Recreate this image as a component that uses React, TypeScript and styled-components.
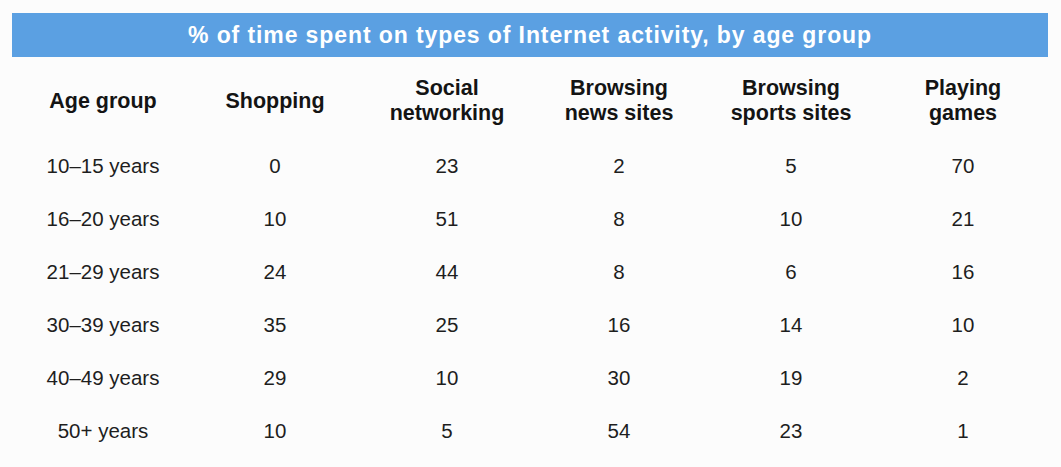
import React from 'react'
import styled, { createGlobalStyle } from 'styled-components'

const GlobalStyle = createGlobalStyle`
    html, body {
        margin: 0;
        padding: 0;
        background: #fcfcfc;
    }
    body {
        font-family: "Liberation Sans", Arial, sans-serif;
    }
`

const headers = [
    ['Age group'],
    ['Shopping'],
    ['Social', 'networking'],
    ['Browsing', 'news sites'],
    ['Browsing', 'sports sites'],
    ['Playing', 'games'],
]

const rows: [string, number, number, number, number, number][] = [
    ['10–15 years', 0, 23, 2, 5, 70],
    ['16–20 years', 10, 51, 8, 10, 21],
    ['21–29 years', 24, 44, 8, 6, 16],
    ['30–39 years', 35, 25, 16, 14, 10],
    ['40–49 years', 29, 10, 30, 19, 2],
    ['50+ years', 10, 5, 54, 23, 1],
]

const App: React.FC = () => {
    return (
        <Page>
            <GlobalStyle />
            <TitleBar>% of time spent on types of Internet activity, by age group</TitleBar>
            <Table>
                <HeaderRow>
                    {headers.map((lines, i) => (
                        <HeaderCell key={i}>
                            {lines.map((line) => (
                                <span key={line}>{line}</span>
                            ))}
                        </HeaderCell>
                    ))}
                </HeaderRow>
                {rows.map((row) => (
                    <DataRow key={row[0]}>
                        {row.map((value, i) => (
                            <Cell key={i}>{value}</Cell>
                        ))}
                    </DataRow>
                ))}
            </Table>
        </Page>
    )
}

const Page = styled.div`
    padding: 13px 0 0 12px;
    width: 1036px;
`

const TitleBar = styled.div`
    height: 44px;
    background: #5ba0e2;
    color: #ffffff;
    font-size: 23px;
    font-weight: 700;
    letter-spacing: 0.9px;
    display: flex;
    align-items: center;
    justify-content: center;
    padding-top: 1px;
    box-sizing: border-box;
`

const Table = styled.div`
    margin-left: 5px;
    width: 1032px;
`

const HeaderRow = styled.div`
    display: grid;
    grid-template-columns: repeat(6, 172px);
    height: 82px;
    padding-top: 6px;
    box-sizing: border-box;
    align-items: center;
`

const HeaderCell = styled.div`
    display: flex;
    flex-direction: column;
    align-items: center;
    font-size: 21.5px;
    font-weight: 700;
    line-height: 25px;
    color: #141414;
`

const DataRow = styled.div`
    display: grid;
    grid-template-columns: repeat(6, 172px);
    height: 53px;
    align-items: center;
`

const Cell = styled.div`
    text-align: center;
    font-size: 20.5px;
    color: #1e1e1e;
`

export default App
